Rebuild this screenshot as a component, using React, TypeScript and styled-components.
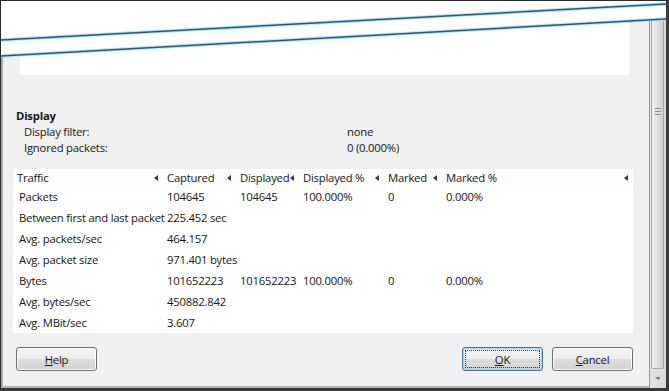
import styled, { createGlobalStyle } from "styled-components";

const GlobalStyle = createGlobalStyle`
  html, body {
    margin: 0;
    padding: 0;
    background: #ffffff;
  }
  body {
    font-family: "Segoe UI", "Open Sans", "Noto Sans", sans-serif;
    font-size: 11.3px;
    letter-spacing: -0.22px;
    color: #161616;
  }
`

const Screen = styled.div`
  position: relative;
  width: 669px;
  height: 391px;
  box-sizing: border-box;
  border: 1px solid #2a2a2a;
  border-right: 3px solid #3c3c3c;
  border-bottom: 3px solid #3a3a3a;
  display: flex;
  overflow: hidden;
  background: #f0f0f0;
`

const Dialog = styled.div`
  flex: 1;
  display: flex;
  flex-direction: column;
  border-left: 2px solid #a6a6a6;
  border-bottom: 2px solid #b4b4b4;
  padding: 0 16px 0 10px;
  background: #f0f0f0;
`

const TextArea = styled.div`
  height: 74px;
  margin: 0 4px 0 7px;
  background: #ffffff;
`

const Section = styled.div`
  margin-top: 33px;
  line-height: 16px;
`

const SectionTitle = styled.div`
  padding-left: 3px;
  font-weight: 700;
`

const InfoGrid = styled.div`
  display: grid;
  grid-template-columns: 334px 1fr;
`

const InfoLabel = styled.div`
  padding-left: 11px;
`

const Table = styled.div`
  margin-top: 13px;
  background: #ffffff;
  display: grid;
  grid-template-columns: 150px 73px 63px 85px 58px 1fr;
`

const HeadCell = styled.div`
  height: 17px;
  line-height: 16px;
  display: flex;
  align-items: center;
  justify-content: space-between;
  padding: 0 5px 0 4px;
  white-space: nowrap;
  background: #fdfdfd;
`

const SortArrow = styled.span`
  flex: none;
  width: 0;
  height: 0;
  border-top: 3px solid transparent;
  border-bottom: 3px solid transparent;
  border-right: 4px solid #3a3a3a;
`

const Cell = styled.div<{ $first?: boolean }>`
  height: 21px;
  line-height: 21px;
  padding-left: ${(p) => (p.$first ? "6px" : "4px")};
  white-space: nowrap;
`

const ButtonRow = styled.div`
  margin-top: 14px;
  display: flex;
  align-items: center;
  gap: 9px;
  padding-left: 3px;
`

const Spacer = styled.div`
  flex: 1;
`

const Button = styled.button<{ $default?: boolean }>`
  width: 81px;
  height: 24px;
  box-sizing: border-box;
  font-family: inherit;
  font-size: 11.3px;
  letter-spacing: inherit;
  color: #161616;
  border-radius: 3px;
  border: 1px solid ${(p) => (p.$default ? "#3a7db3" : "#707070")};
  background: linear-gradient(#f4f4f4 0%, #ececec 48%, #dddddd 52%, #d2d2d2 100%);
  box-shadow: inset 0 0 0 1px ${(p) => (p.$default ? "#9fd3f2" : "#fbfbfb")};
  padding: 2px;
  u {
    text-decoration: underline;
  }
`

const Focus = styled.span`
  display: flex;
  align-items: center;
  justify-content: center;
  width: 100%;
  height: 100%;
  box-sizing: border-box;
  border: 1px dotted #333;
`

const Label = styled.span`
  display: flex;
  align-items: center;
  justify-content: center;
  width: 100%;
  height: 100%;
`

const Scrollbar = styled.div`
  width: 16px;
  display: flex;
  flex-direction: column;
  border-left: 1px solid #9a9a9a;
  background: linear-gradient(to right, #e4e4e4, #d9d9d9);
`

const Thumb = styled.div`
  flex: 1;
  margin: 0 2px 0 1px;
  border: 1px solid #a9a9a9;
  border-top: none;
  border-radius: 0 0 2px 2px;
  background: linear-gradient(to right, #f1f1f1, #dedede 60%, #d0d0d0);
  display: flex;
  flex-direction: column;
  align-items: center;
`

const Grip = styled.span`
  margin-top: 107px;
  width: 6px;
  height: 7px;
  background: repeating-linear-gradient(#8c8c8c 0 1px, transparent 1px 3px);
`

const ArrowButton = styled.div`
  height: 19px;
  display: flex;
  align-items: center;
  justify-content: center;
`

const DownArrow = styled.span`
  width: 0;
  height: 0;
  border-left: 3px solid transparent;
  border-right: 3px solid transparent;
  border-top: 3px solid #7a7a7a;
`

const Tear = styled.svg`
  position: absolute;
  left: 0;
  top: 0;
`

const columns = ["Traffic", "Captured", "Displayed", "Displayed %", "Marked", "Marked %"]

const rows: string[][] = [
  ["Packets", "104645", "104645", "100.000%", "0", "0.000%"],
  ["Between first and last packet", "225.452 sec", "", "", "", ""],
  ["Avg. packets/sec", "464.157", "", "", "", ""],
  ["Avg. packet size", "971.401 bytes", "", "", "", ""],
  ["Bytes", "101652223", "101652223", "100.000%", "0", "0.000%"],
  ["Avg. bytes/sec", "450882.842", "", "", "", ""],
  ["Avg. MBit/sec", "3.607", "", "", "", ""],
]

const App = () => {
  return (
    <>
      <GlobalStyle />
      <Screen>
        <Dialog>
          <TextArea />
          <Section>
            <SectionTitle>Display</SectionTitle>
            <InfoGrid>
              <InfoLabel>Display filter:</InfoLabel>
              <div>none</div>
              <InfoLabel>Ignored packets:</InfoLabel>
              <div>0 (0.000%)</div>
            </InfoGrid>
          </Section>
          <Table>
            {columns.map((c) => (
              <HeadCell key={c}>
                {c}
                <SortArrow />
              </HeadCell>
            ))}
            {rows.map((r, i) =>
              r.map((v, j) => (
                <Cell key={`${i}-${j}`} $first={j === 0}>
                  {v}
                </Cell>
              ))
            )}
          </Table>
          <ButtonRow>
            <Button>
              <Label><u>H</u>elp</Label>
            </Button>
            <Spacer />
            <Button $default>
              <Focus><u>O</u>K</Focus>
            </Button>
            <Button>
              <Label><u>C</u>ancel</Label>
            </Button>
          </ButtonRow>
        </Dialog>
        <Scrollbar>
          <Thumb>
            <Grip />
          </Thumb>
          <ArrowButton>
            <DownArrow />
          </ArrowButton>
        </Scrollbar>
        <Tear width="665" height="62" viewBox="0 0 665 62">
          <polygon points="0,0 665,0 665,19 0,55" fill="#ffffff" />
          <path d="M0 39 Q 330 20 665 3" stroke="#b6e4f6" strokeWidth="3.5" fill="none" />
          <path d="M0 55 Q 330 36 665 18" stroke="#b6e4f6" strokeWidth="3.5" fill="none" />
          <path d="M0 39 Q 330 20 665 3" stroke="#225d80" strokeWidth="1.5" fill="none" />
          <path d="M0 55 Q 330 36 665 18" stroke="#225d80" strokeWidth="1.5" fill="none" />
        </Tear>
      </Screen>
    </>
  )
}

export default App
